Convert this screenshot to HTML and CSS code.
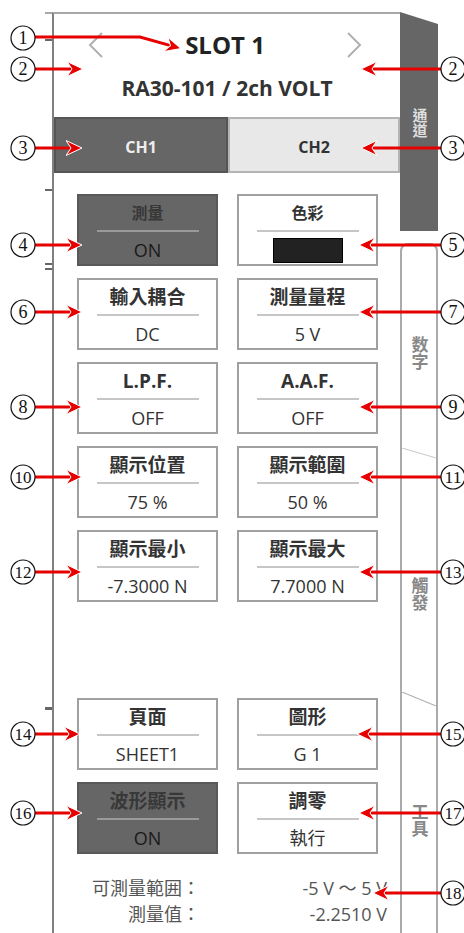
FILE: index.html
```html
<!DOCTYPE html>
<html lang="zh-Hant">
<head>
    <meta charset="UTF-8">
    <meta name="viewport" content="width=device-width, initial-scale=1.0">
    <title>SLOT 1</title>
    <link rel="stylesheet" href="styles.css">
</head>
<body>

<div class="page">
    <div class="frame">
        <!-- marcas da borda esquerda -->
        <div class="ruler">
            <span class="tick t1"></span>
            <span class="tick t2"></span>
            <span class="tick t3"></span>
            <span class="tick t4"></span>
            <span class="tick t5"></span>
        </div>

        <div class="panel">
            <div class="head">
                <div class="slot-row">
                    <svg class="chev" viewBox="0 0 16 26"><polyline points="14,1 2,13 14,25"/></svg>
                    <span class="slot">SLOT 1</span>
                    <svg class="chev" viewBox="0 0 16 26"><polyline points="2,1 14,13 2,25"/></svg>
                </div>
                <div class="model">RA30-101 / 2ch VOLT</div>
            </div>

            <div class="chtabs">
                <div class="ch on">CH1</div>
                <div class="ch">CH2</div>
            </div>

            <div class="grid">
                <div class="btn dark">
                    <span class="lbl sm">測量</span><span class="rule"></span><span class="val">ON</span>
                </div>
                <div class="btn">
                    <span class="lbl sm">色彩</span><span class="rule"></span><span class="swatch"></span>
                </div>
                <div class="btn">
                    <span class="lbl">輸入耦合</span><span class="rule"></span><span class="val">DC</span>
                </div>
                <div class="btn">
                    <span class="lbl">測量量程</span><span class="rule"></span><span class="val">5 V</span>
                </div>
                <div class="btn">
                    <span class="lbl">L.P.F.</span><span class="rule"></span><span class="val">OFF</span>
                </div>
                <div class="btn">
                    <span class="lbl">A.A.F.</span><span class="rule"></span><span class="val">OFF</span>
                </div>
                <div class="btn">
                    <span class="lbl">顯示位置</span><span class="rule"></span><span class="val">75 %</span>
                </div>
                <div class="btn">
                    <span class="lbl">顯示範圍</span><span class="rule"></span><span class="val">50 %</span>
                </div>
                <div class="btn">
                    <span class="lbl">顯示最小</span><span class="rule"></span><span class="val">-7.3000 N</span>
                </div>
                <div class="btn">
                    <span class="lbl">顯示最大</span><span class="rule"></span><span class="val">7.7000 N</span>
                </div>
            </div>

            <div class="grid low">
                <div class="btn">
                    <span class="lbl">頁面</span><span class="rule"></span><span class="val">SHEET1</span>
                </div>
                <div class="btn">
                    <span class="lbl">圖形</span><span class="rule"></span><span class="val">G 1</span>
                </div>
                <div class="btn dark">
                    <span class="lbl">波形顯示</span><span class="rule"></span><span class="val">ON</span>
                </div>
                <div class="btn">
                    <span class="lbl">調零</span><span class="rule"></span><span class="val">執行</span>
                </div>
            </div>

            <div class="info">
                <span class="k">可測量範囲：</span><span class="v">-5 V ～ 5 V</span>
                <span class="k">測量值：</span><span class="v">-2.2510 V</span>
            </div>
        </div>

        <!-- abas laterais -->
        <div class="side">
            <div class="tab tab1"><span>通道</span></div>
            <div class="tab tab2"><span>数字</span></div>
            <div class="tab tab3"><span>觸發</span></div>
            <div class="tab tab4"><span>工具</span></div>
        </div>
    </div>

    <!-- números e setas de anotação -->
    <svg class="marks" viewBox="0 0 464 933">
        <defs>
            <marker id="head" viewBox="0 0 16 16" markerWidth="16" markerHeight="16" refX="8" refY="8" orient="auto" markerUnits="userSpaceOnUse">
                <path d="M0,0.5 L16,8 L0,15.5 L5,8 Z" class="tip"/>
            </marker>
        </defs>

        <path class="arr" d="M35,37 H140 L173.4,46.4"/>
        <path class="arr" d="M35,69 H75"/>
        <path class="arr" d="M35,148 H74"/>
        <path class="arr" d="M35,245 H74"/>
        <path class="arr" d="M35,312 H74"/>
        <path class="arr" d="M35,407 H74"/>
        <path class="arr" d="M35,477 H74"/>
        <path class="arr" d="M35,572 H74"/>
        <path class="arr" d="M35,734 H72"/>
        <path class="arr" d="M35,813 H74"/>

        <path class="arr" d="M441,69 H369"/>
        <path class="arr" d="M441,148 H369"/>
        <path class="arr" d="M441,245 H367"/>
        <path class="arr" d="M441,312 H367"/>
        <path class="arr" d="M441,407 H367"/>
        <path class="arr" d="M441,477 H367"/>
        <path class="arr" d="M441,572 H367"/>
        <path class="arr" d="M441,734 H365"/>
        <path class="arr" d="M441,813 H367"/>
        <path class="arr" d="M441,893 H381"/>

        <circle class="c" cx="23" cy="38" r="12"/><text class="n" x="23" y="44">1</text>
        <circle class="c" cx="23" cy="69" r="12"/><text class="n" x="23" y="75">2</text>
        <circle class="c" cx="23" cy="148" r="12"/><text class="n" x="23" y="154">3</text>
        <circle class="c" cx="23" cy="245" r="12"/><text class="n" x="23" y="251">4</text>
        <circle class="c" cx="23" cy="312" r="12"/><text class="n" x="23" y="318">6</text>
        <circle class="c" cx="23" cy="407" r="12"/><text class="n" x="23" y="413">8</text>
        <circle class="c" cx="23" cy="477" r="12"/><text class="n nn" x="23" y="483" textLength="17" lengthAdjust="spacingAndGlyphs">10</text>
        <circle class="c" cx="23" cy="572" r="12"/><text class="n nn" x="23" y="578" textLength="17" lengthAdjust="spacingAndGlyphs">12</text>
        <circle class="c" cx="23" cy="734" r="12"/><text class="n nn" x="23" y="740" textLength="17" lengthAdjust="spacingAndGlyphs">14</text>
        <circle class="c" cx="23" cy="813" r="12"/><text class="n nn" x="23" y="819" textLength="17" lengthAdjust="spacingAndGlyphs">16</text>

        <circle class="c" cx="453" cy="69" r="12"/><text class="n" x="453" y="75">2</text>
        <circle class="c" cx="453" cy="148" r="12"/><text class="n" x="453" y="154">3</text>
        <circle class="c" cx="453" cy="245" r="12"/><text class="n" x="453" y="251">5</text>
        <circle class="c" cx="453" cy="312" r="12"/><text class="n" x="453" y="318">7</text>
        <circle class="c" cx="453" cy="407" r="12"/><text class="n" x="453" y="413">9</text>
        <circle class="c" cx="453" cy="477" r="12"/><text class="n nn" x="453" y="483" textLength="17" lengthAdjust="spacingAndGlyphs">11</text>
        <circle class="c" cx="453" cy="572" r="12"/><text class="n nn" x="453" y="578" textLength="17" lengthAdjust="spacingAndGlyphs">13</text>
        <circle class="c" cx="453" cy="734" r="12"/><text class="n nn" x="453" y="740" textLength="17" lengthAdjust="spacingAndGlyphs">15</text>
        <circle class="c" cx="453" cy="813" r="12"/><text class="n nn" x="453" y="819" textLength="17" lengthAdjust="spacingAndGlyphs">17</text>
        <circle class="c" cx="453" cy="893" r="12"/><text class="n nn" x="453" y="899" textLength="17" lengthAdjust="spacingAndGlyphs">18</text>
    </svg>
</div>

</body>
</html>
```

FILE: styles.css
```css
body {
    margin: 0;
    background-color: #fff;
    font-family: "Open Sans", "Noto Sans CJK JP", sans-serif;
    color: #333;
}
.page {
    position: relative;
    width: 464px;
    height: 933px;
    overflow: hidden;
}
.frame {
    display: flex;
    height: 100%;
    padding: 12px 0 0 45px;
    box-sizing: border-box;
}

/* borda esquerda */
.ruler {
    width: 7px;
    border-top: 2px solid #a8a8a8;
    display: flex;
    flex-direction: column;
}
.tick {
    width: 7px;
    height: 2px;
    background-color: #666;
    flex: none;
}
.t1 { margin-top: 25px; }
.t2 { margin-top: 148px; }
.t3 { margin-top: 72px; }
.t4 { margin-top: 3px; }
.t5 { margin-top: 437px; height: 3px; }

.panel {
    width: 348px;
    box-sizing: border-box;
    border-left: 2px solid #808080;
    border-top: 2px solid #a8a8a8;
    display: flex;
    flex-direction: column;
}
.head {
    height: 103px;
    display: flex;
    flex-direction: column;
    flex: none;
}
.slot-row {
    display: flex;
    align-items: center;
    justify-content: space-between;
    height: 32px;
    margin-top: 15px;
    padding: 0 38px 0 34px;
}
.chev {
    width: 16px;
    height: 26px;
    fill: none;
    stroke: #b0b0b0;
    stroke-width: 2;
}
.slot {
    font-weight: 700;
    font-size: 24px;
    line-height: 32px;
    color: #222;
}
.model {
    margin-top: 14px;
    text-align: center;
    font-weight: 700;
    font-size: 21px;
    line-height: 26px;
    color: #333;
}

/* abas de canal */
.chtabs {
    display: flex;
    height: 56px;
    flex: none;
}
.ch {
    flex: 1;
    display: flex;
    align-items: center;
    justify-content: center;
    box-sizing: border-box;
    padding-top: 4px;
    border: 2px solid #b4b4b4;
    background-color: #e8e8e8;
    font-weight: 700;
    font-size: 16px;
    color: #333;
}
.ch.on {
    flex: 0 0 174px;
    background-color: #666;
    border-color: #555;
    color: #eee;
}

/* botões */
.grid {
    display: grid;
    grid-template-columns: 141px 141px;
    column-gap: 19px;
    row-gap: 12px;
    padding-left: 23px;
    margin-top: 21px;
}
.grid.low {
    margin-top: 96px;
}
.btn {
    height: 72px;
    box-sizing: border-box;
    border: 2px solid #a0a0a0;
    background-color: #fff;
    display: flex;
    flex-direction: column;
    align-items: center;
}
.lbl {
    height: 34px;
    line-height: 34px;
    font-weight: 700;
    font-size: 19px;
    color: #333;
}
.lbl.sm {
    font-size: 16px;
}
.rule {
    width: 102px;
    height: 2px;
    background-color: #c6c6c6;
    flex: none;
}
.val {
    padding-top: 2px;
    line-height: 32px;
    font-size: 18px;
    color: #333;
}
.btn.dark {
    background-color: #666;
    border-color: #595959;
}
.btn.dark .lbl {
    color: #383838;
}
.btn.dark .val {
    color: #1a1a1a;
}
.btn.dark .rule {
    background-color: #9a9a9a;
}
.swatch {
    width: 70px;
    height: 25px;
    margin-top: 6px;
    box-sizing: border-box;
    background-color: #222;
    border: 1px solid #000;
}

.info {
    margin-top: 21px;
    display: grid;
    grid-template-columns: 146px 187px;
    font-size: 18px;
    line-height: 26px;
    color: #555;
}
.info .k, .info .v {
    text-align: right;
}

/* abas laterais */
.side {
    width: 38px;
    display: flex;
    flex-direction: column;
}
.tab {
    box-sizing: border-box;
    display: flex;
    justify-content: center;
    flex: none;
}
.tab span {
    writing-mode: vertical-rl;
    font-weight: 700;
    font-size: 17px;
    line-height: 1;
    color: #888;
}
.tab1 {
    height: 219px;
    padding-top: 96px;
    background-color: #666;
    clip-path: polygon(0 0, 100% 12px, 100% 100%, 0 100%);
}
.tab1 span {
    color: #ddd;
    font-size: 15px;
}
.tab2 {
    margin-top: 12px;
    height: 215px;
    padding-top: 91px;
    border: 2px solid #aaa;
    border-bottom: none;
    border-radius: 8px 8px 0 0;
    background: linear-gradient(to top right, transparent 45%, #c8c8c8 50%, transparent 55%) bottom / 100% 10px no-repeat;
}
.tab3 {
    height: 248px;
    padding-top: 119px;
    border-left: 2px solid #aaa;
    border-right: 2px solid #aaa;
    background: linear-gradient(to top right, transparent calc(50% - 1px), #aaa 50%, transparent calc(50% + 1px)) bottom / 100% 14px no-repeat;
}
.tab4 {
    flex: 1;
    padding-top: 97px;
    border-left: 2px solid #aaa;
    border-right: 2px solid #aaa;
}

/* anotações */
.marks {
    position: absolute;
    left: 0;
    top: 0;
    width: 464px;
    height: 933px;
    pointer-events: none;
}
.arr {
    fill: none;
    stroke: #e60000;
    stroke-width: 3;
    marker-end: url(#head);
}
.tip {
    fill: #e60000;
    stroke: #fff;
    stroke-width: 1;
}
.c {
    fill: #fff;
    stroke: #111;
    stroke-width: 1.2;
}
.n {
    font-family: "Liberation Serif", "DejaVu Serif", serif;
    font-size: 18px;
    text-anchor: middle;
    fill: #111;
}
.n.nn {
    font-size: 17px;
}
```
